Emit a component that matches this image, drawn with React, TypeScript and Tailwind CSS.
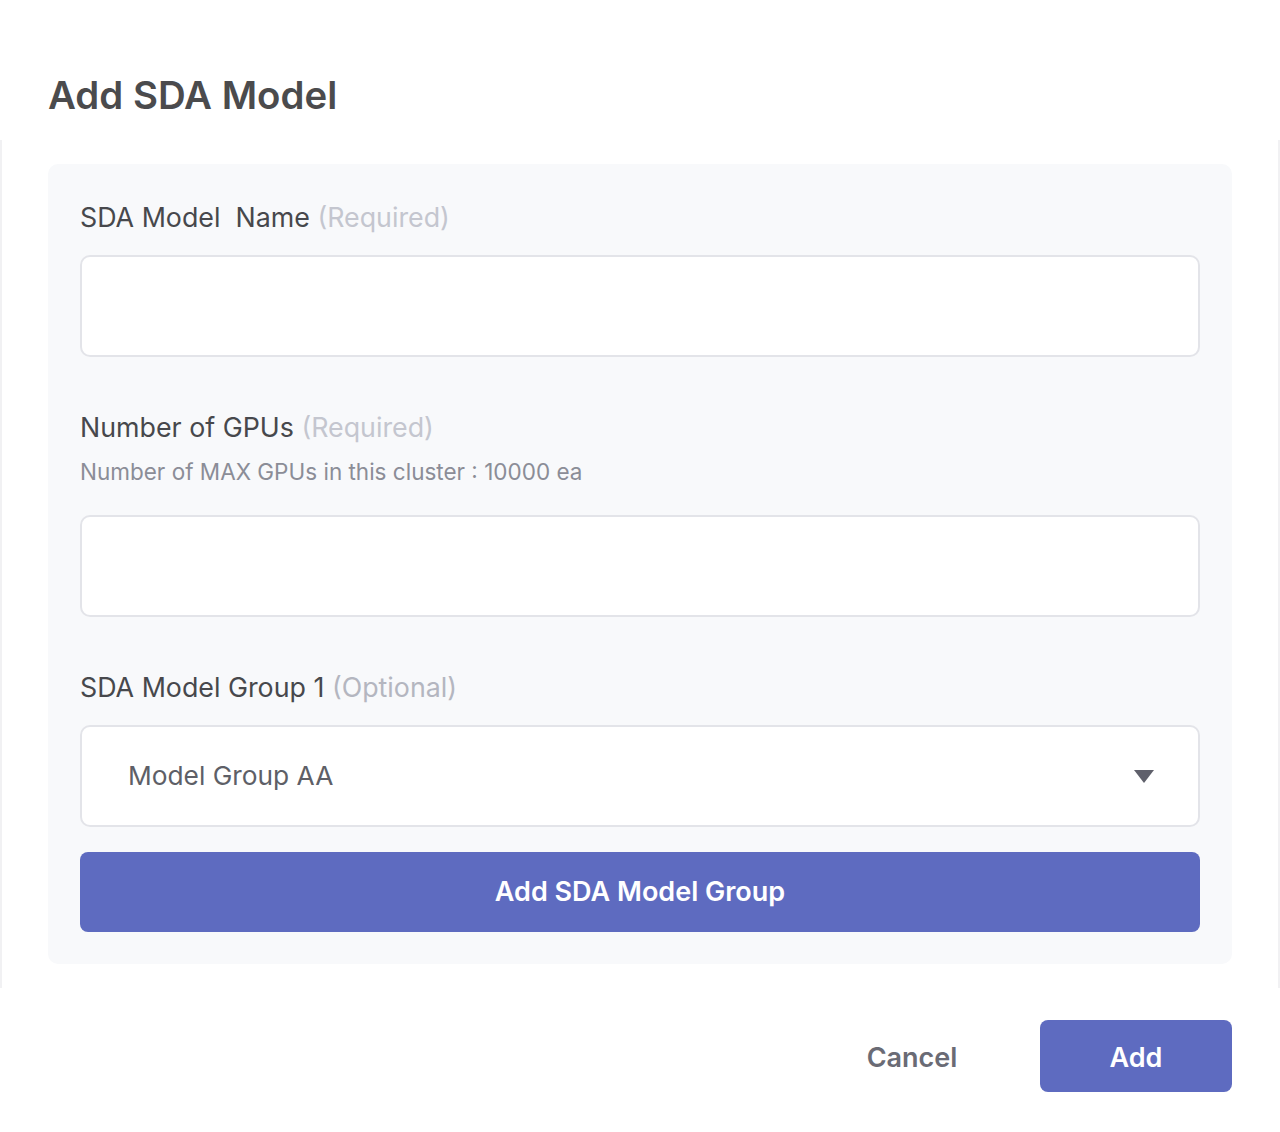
import React from "react";

export default function App() {
  const font = { fontFamily: "Inter, 'Noto Sans', sans-serif" } as React.CSSProperties;
  return (
    <div className="w-[1280px] h-[1132px] bg-white flex flex-col" style={font}>
      <div className="h-[140px] px-12 pt-[72px]">
        <h1 className="text-[38.4px] leading-[46px] font-semibold text-[#4b4b4d]">Add SDA Model</h1>
      </div>
      <div className="h-[848px] border-l-2 border-r-2 border-[#f1f1f3] px-[46px] py-6">
        <div className="h-[800px] bg-[#f8f9fb] rounded-[10px] px-8 pt-[35px] flex flex-col">
          <label className="text-[26.8px] leading-[36px] text-[#47484c]">
            SDA Model&nbsp; Name <span className="text-[#c4c6cf]">(Required)</span>
          </label>
          <input className="mt-5 h-[102px] bg-white border-2 border-[#e3e4e9] rounded-[10px] outline-none" />
          <label className="mt-[52px] text-[26.8px] leading-[36px] text-[#47484c]">
            Number of GPUs <span className="text-[#c4c6cf]">(Required)</span>
          </label>
          <p className="mt-3 text-[22.5px] leading-[30px] text-[#8b8d97]">Number of MAX GPUs in this cluster : 10000 ea</p>
          <input className="mt-7 h-[102px] bg-white border-2 border-[#e3e4e9] rounded-[10px] outline-none" />
          <label className="mt-[52px] text-[26.8px] leading-[36px] text-[#47484c]">
            SDA Model Group 1 <span className="text-[#b4b6c0]">(Optional)</span>
          </label>
          <div className="mt-5 h-[102px] bg-white border-2 border-[#e3e4e9] rounded-[10px] flex items-center justify-between pl-[46px] pr-[44px]">
            <span className="text-[26.3px] text-[#5e5f67]">Model Group AA</span>
            <svg width="20" height="13" viewBox="0 0 20 13">
              <polygon points="0,0 20,0 10,13" fill="#5f606b" />
            </svg>
          </div>
          <button className="mt-[25px] h-[80px] bg-[#5e6bc0] rounded-lg text-white text-[27px] font-semibold">
            Add SDA Model Group
          </button>
        </div>
      </div>
      <div className="flex justify-end items-start pt-8 pr-12 gap-8">
        <button className="w-[192px] h-[72px] pt-1 text-[27px] font-semibold text-[#6a6b75]">Cancel</button>
        <button className="w-[192px] h-[72px] pt-1 bg-[#5e6bc0] rounded-lg text-[27px] font-semibold text-white">Add</button>
      </div>
    </div>
  );
}
